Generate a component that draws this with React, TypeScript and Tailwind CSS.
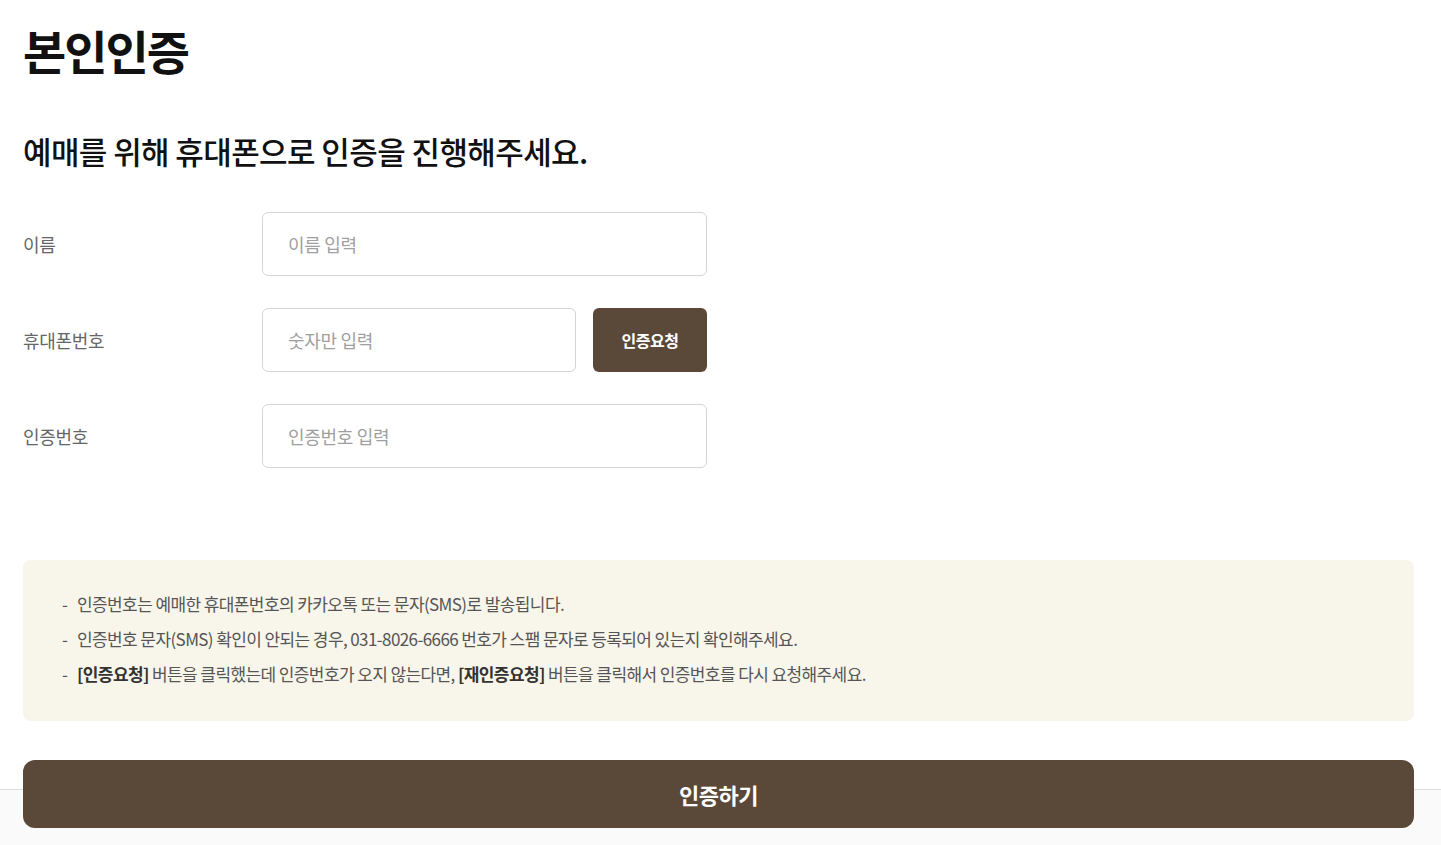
import React from "react";

const font = { fontFamily: '"Noto Sans CJK KR", "Noto Sans", sans-serif' };

function Row({ label, placeholder, withButton }: { label: string; placeholder: string; withButton?: boolean }) {
  return (
    <div className="flex items-center">
      <div className="w-[239px] text-[18px] text-[#666] tracking-[-0.3px]">{label}</div>
      <div className="flex w-[445px] gap-[17px]">
        <input
          placeholder={placeholder}
          className="h-[64px] flex-1 min-w-0 rounded-[6px] border border-[#d4d4d4] bg-white pl-[25px] text-[18px] tracking-[-0.3px] text-[#333] placeholder:text-[#a0a0a0] outline-none"
          style={font}
        />
        {withButton && (
          <button
            className="h-[64px] w-[114px] shrink-0 rounded-[6px] bg-[#5a4839] text-[16px] font-bold tracking-[-0.5px] text-white"
            style={font}
          >
            인증요청
          </button>
        )}
      </div>
    </div>
  );
}

function Item({ children }: { children: React.ReactNode }) {
  return (
    <p className="flex">
      <span className="w-[15px] shrink-0">-</span>
      <span>{children}</span>
    </p>
  );
}

export default function App() {
  return (
    <div className="min-h-[845px] bg-white" style={font}>
      <div className="pl-[23px] pr-[27px] pt-[15px]">
        <h1 className="text-[47px] font-bold leading-[70px] tracking-[-2px] text-[#111]">본인인증</h1>
        <h2 className="mt-[44px] text-[31px] font-medium leading-[44px] tracking-[-0.6px] text-[#111]">
          예매를 위해 휴대폰으로 인증을 진행해주세요.
        </h2>
        <div className="mt-[39px] flex flex-col gap-[32px]">
          <Row label="이름" placeholder="이름 입력" />
          <Row label="휴대폰번호" placeholder="숫자만 입력" withButton />
          <Row label="인증번호" placeholder="인증번호 입력" />
        </div>
        <div className="mt-[92px] rounded-[8px] bg-[#f8f5eb] pl-[39px] pt-[26px] pb-[30px] text-[17px] leading-[35px] tracking-[-0.6px] text-[#555]">
          <Item>인증번호는 예매한 휴대폰번호의 카카오톡 또는 문자(SMS)로 발송됩니다.</Item>
          <Item>인증번호 문자(SMS) 확인이 안되는 경우, 031-8026-6666 번호가 스팸 문자로 등록되어 있는지 확인해주세요.</Item>
          <Item>
            <b className="font-bold text-[#333]">[인증요청]</b> 버튼을 클릭했는데 인증번호가 오지 않는다면,{" "}
            <b className="font-bold text-[#333]">[재인증요청]</b> 버튼을 클릭해서 인증번호를 다시 요청해주세요.
          </Item>
        </div>
      </div>
      <div className="mt-[39px]">
        <div className="relative z-10 pl-[23px] pr-[27px]">
          <button className="h-[68px] w-full rounded-[12px] bg-[#5a4839] text-[22px] font-bold tracking-[-0.5px] text-white" style={font}>
            인증하기
          </button>
        </div>
        <div className="-mt-[39px] h-[60px] border-t border-[#dcdcdc] bg-[#fafafa]" />
      </div>
    </div>
  );
}
